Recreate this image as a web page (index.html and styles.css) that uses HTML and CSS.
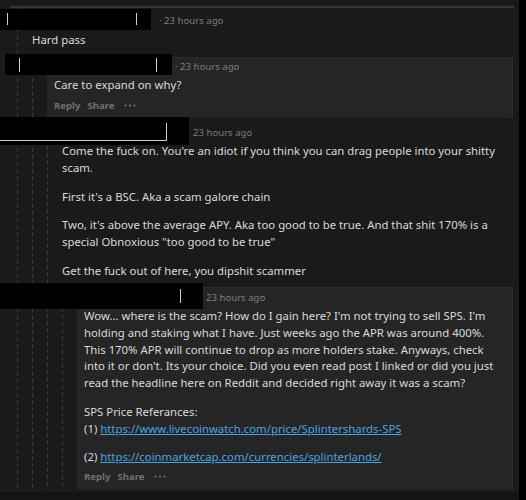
FILE: index.html
```html
<!DOCTYPE html>
<html>
<head>
    <title>Comment thread</title>
    <link rel="stylesheet" href="styles.css">
</head>
<body>
    <div class="page">
        <div class="top-rule"></div>

        <div class="thread">
            <!-- comment 1 -->
            <div class="comment c1">
                <div class="rail"></div>
                <div class="main">
                    <div class="head"><span class="meta">· 23 hours ago</span></div>
                    <div class="text"><p>Hard pass</p></div>

                    <!-- comment 2 -->
                    <div class="comment c2">
                        <div class="rail"></div>
                        <div class="main">
                            <div class="highlight">
                                <div class="head"><span class="meta">· 23 hours ago</span></div>
                                <div class="text"><p>Care to expand on why?</p></div>
                                <div class="actions">
                                    <span>Reply</span>
                                    <span>Share</span>
                                    <svg class="more" width="12" height="3" viewBox="0 0 12 3"><circle cx="1.5" cy="1.5" r="1.1"/><circle cx="6" cy="1.5" r="1.1"/><circle cx="10.5" cy="1.5" r="1.1"/></svg>
                                </div>
                            </div>

                            <!-- comment 3 -->
                            <div class="comment c3">
                                <div class="rail"></div>
                                <div class="main">
                                    <div class="head"><span class="meta">23 hours ago</span></div>
                                    <div class="text">
                                        <p>Come the fuck on. You're an idiot if you think you can drag people into your shitty scam.</p>
                                        <p>First it's a BSC. Aka a scam galore chain</p>
                                        <p>Two, it's above the average APY. Aka too good to be true. And that shit 170% is a special Obnoxious "too good to be true"</p>
                                        <p>Get the fuck out of here, you dipshit scammer</p>
                                    </div>

                                    <!-- comment 4 -->
                                    <div class="comment c4">
                                        <div class="rail"></div>
                                        <div class="main">
                                            <div class="highlight">
                                                <div class="head"><span class="meta">23 hours ago</span></div>
                                                <div class="text">
                                                    <p>Wow... where is the scam? How do I gain here? I'm not trying to sell SPS. I'm holding and staking what I have. Just weeks ago the APR was around 400%. This 170% APR will continue to drop as more holders stake. Anyways, check into it or don't. Its your choice. Did you even read post I linked or did you just read the headline here on Reddit and decided right away it was a scam?</p>
                                                    <p>SPS Price Referances:<br>(1) <a href="#">https://www.livecoinwatch.com/price/Splintershards-SPS</a></p>
                                                    <p>(2) <a href="#">https://coinmarketcap.com/currencies/splinterlands/</a></p>
                                                </div>
                                                <div class="actions">
                                                    <span>Reply</span>
                                                    <span>Share</span>
                                                    <svg class="more" width="12" height="3" viewBox="0 0 12 3"><circle cx="1.5" cy="1.5" r="1.1"/><circle cx="6" cy="1.5" r="1.1"/><circle cx="10.5" cy="1.5" r="1.1"/></svg>
                                                </div>
                                            </div>
                                        </div>
                                    </div>
                                </div>
                            </div>
                        </div>
                    </div>
                </div>
            </div>
        </div>

        <div class="page-end"></div>

        <!-- redacted usernames -->
        <div class="redact r1"><i class="mark m1a"></i><i class="mark m1b"></i></div>
        <div class="redact r2"><i class="mark m2a"></i><i class="mark m2b"></i></div>
        <div class="redact r3"><i class="mark m3a"></i><i class="mark m3b"></i></div>
        <div class="redact r4"><i class="mark m4a"></i></div>
    </div>
</body>
</html>
```

FILE: styles.css
```css
html, body {
    margin: 0;
    background-color: #000;
}

body {
    font-family: 'Noto Sans', 'Liberation Sans', sans-serif;
    color: #d7dadc;
    width: 526px;
    height: 500px;
    overflow: hidden;
}

.page {
    position: relative;
    width: 519px;
    height: 500px;
    background-color: #1a1a1b;
    padding-top: 6px;
    box-sizing: border-box;
}

.top-rule {
    height: 2px;
    margin: 0 5px 0 10px;
    background-color: #343536;
}

.thread {
    padding: 0 6px 0 17px;
}

/* comment layout */
.comment {
    display: flex;
}

.rail {
    flex: none;
    width: 15px;
    background-image: repeating-linear-gradient(to bottom, #3b3b3c 0, #3b3b3c 4px, transparent 4px, transparent 7px);
    background-size: 1px 100%;
    background-repeat: no-repeat;
}

.main {
    flex: 1;
    min-width: 0;
}

.highlight {
    background-color: #252526;
    border-radius: 2px;
    box-shadow: inset -1px 0 0 #2d2d2e, inset 0 1px 0 #2a2a2b;
    padding: 4px 7px 7px;
}

.head {
    height: 12px;
    display: flex;
    align-items: center;
}

.meta {
    font-size: 9.6px;
    line-height: 12px;
    color: #7c7e80;
}

.text {
    font-size: 11.35px;
    line-height: 16.8px;
    margin-top: 4px;
}

.text p {
    margin: 0;
}

.text p + p {
    margin-top: 11.8px;
}

.text a {
    color: #4ca3e0;
}

.actions {
    display: flex;
    align-items: center;
    gap: 7px;
    height: 12px;
    margin-top: 5px;
    font-size: 9.6px;
    font-weight: bold;
    color: #6f7173;
}

.actions .more {
    fill: #6f7173;
    margin-left: 2px;
}

/* per comment spacing */
.c1 > .main > .head {
    padding: 7px 0 5px;
}

.c1 > .main > .head .meta {
    margin-left: 127px;
}

.c1 > .main > .text {
    margin-top: 0;
    margin-bottom: 8.6px;
}

.c2 .highlight .meta {
    margin-left: 121px;
}

.c3 > .main > .head {
    padding-top: 8.5px;
}

.c3 > .main > .head .meta {
    margin-left: 131px;
}

.c3 > .main > .text {
    margin-top: 4.6px;
    margin-bottom: 8px;
}

.c4 .highlight {
    padding-top: 5px;
    padding-bottom: 7.5px;
}

.c4 .highlight .meta {
    margin-left: 122px;
}

.c4 .highlight .text {
    margin-top: 3.5px;
}

.page-end {
    position: absolute;
    left: 0;
    right: 0;
    bottom: 0;
    height: 8px;
    background-color: #141414;
}

/* redacted names laid over the headers */
.redact {
    position: absolute;
    background-color: #000;
}

.mark {
    position: absolute;
    background-color: #cfcfcf;
    width: 1px;
}

.r1 { left: 0; top: 9px; width: 151px; height: 21px; }
.m1a { left: 7px; top: 4px; height: 12px; }
.m1b { left: 136px; top: 4px; height: 12px; }

.r2 { left: 5px; top: 54px; width: 167px; height: 21px; }
.m2a { left: 14px; top: 4px; height: 14px; }
.m2b { left: 151px; top: 4px; height: 14px; }

.r3 { left: 0; top: 117px; width: 189px; height: 28px; }
.m3a { left: 0; top: 23px; width: 166px; height: 1px; }
.m3b { left: 166px; top: 6px; height: 18px; }

.r4 { left: 0; top: 283px; width: 203px; height: 26px; }
.m4a { left: 180px; top: 6px; height: 14px; }
```
